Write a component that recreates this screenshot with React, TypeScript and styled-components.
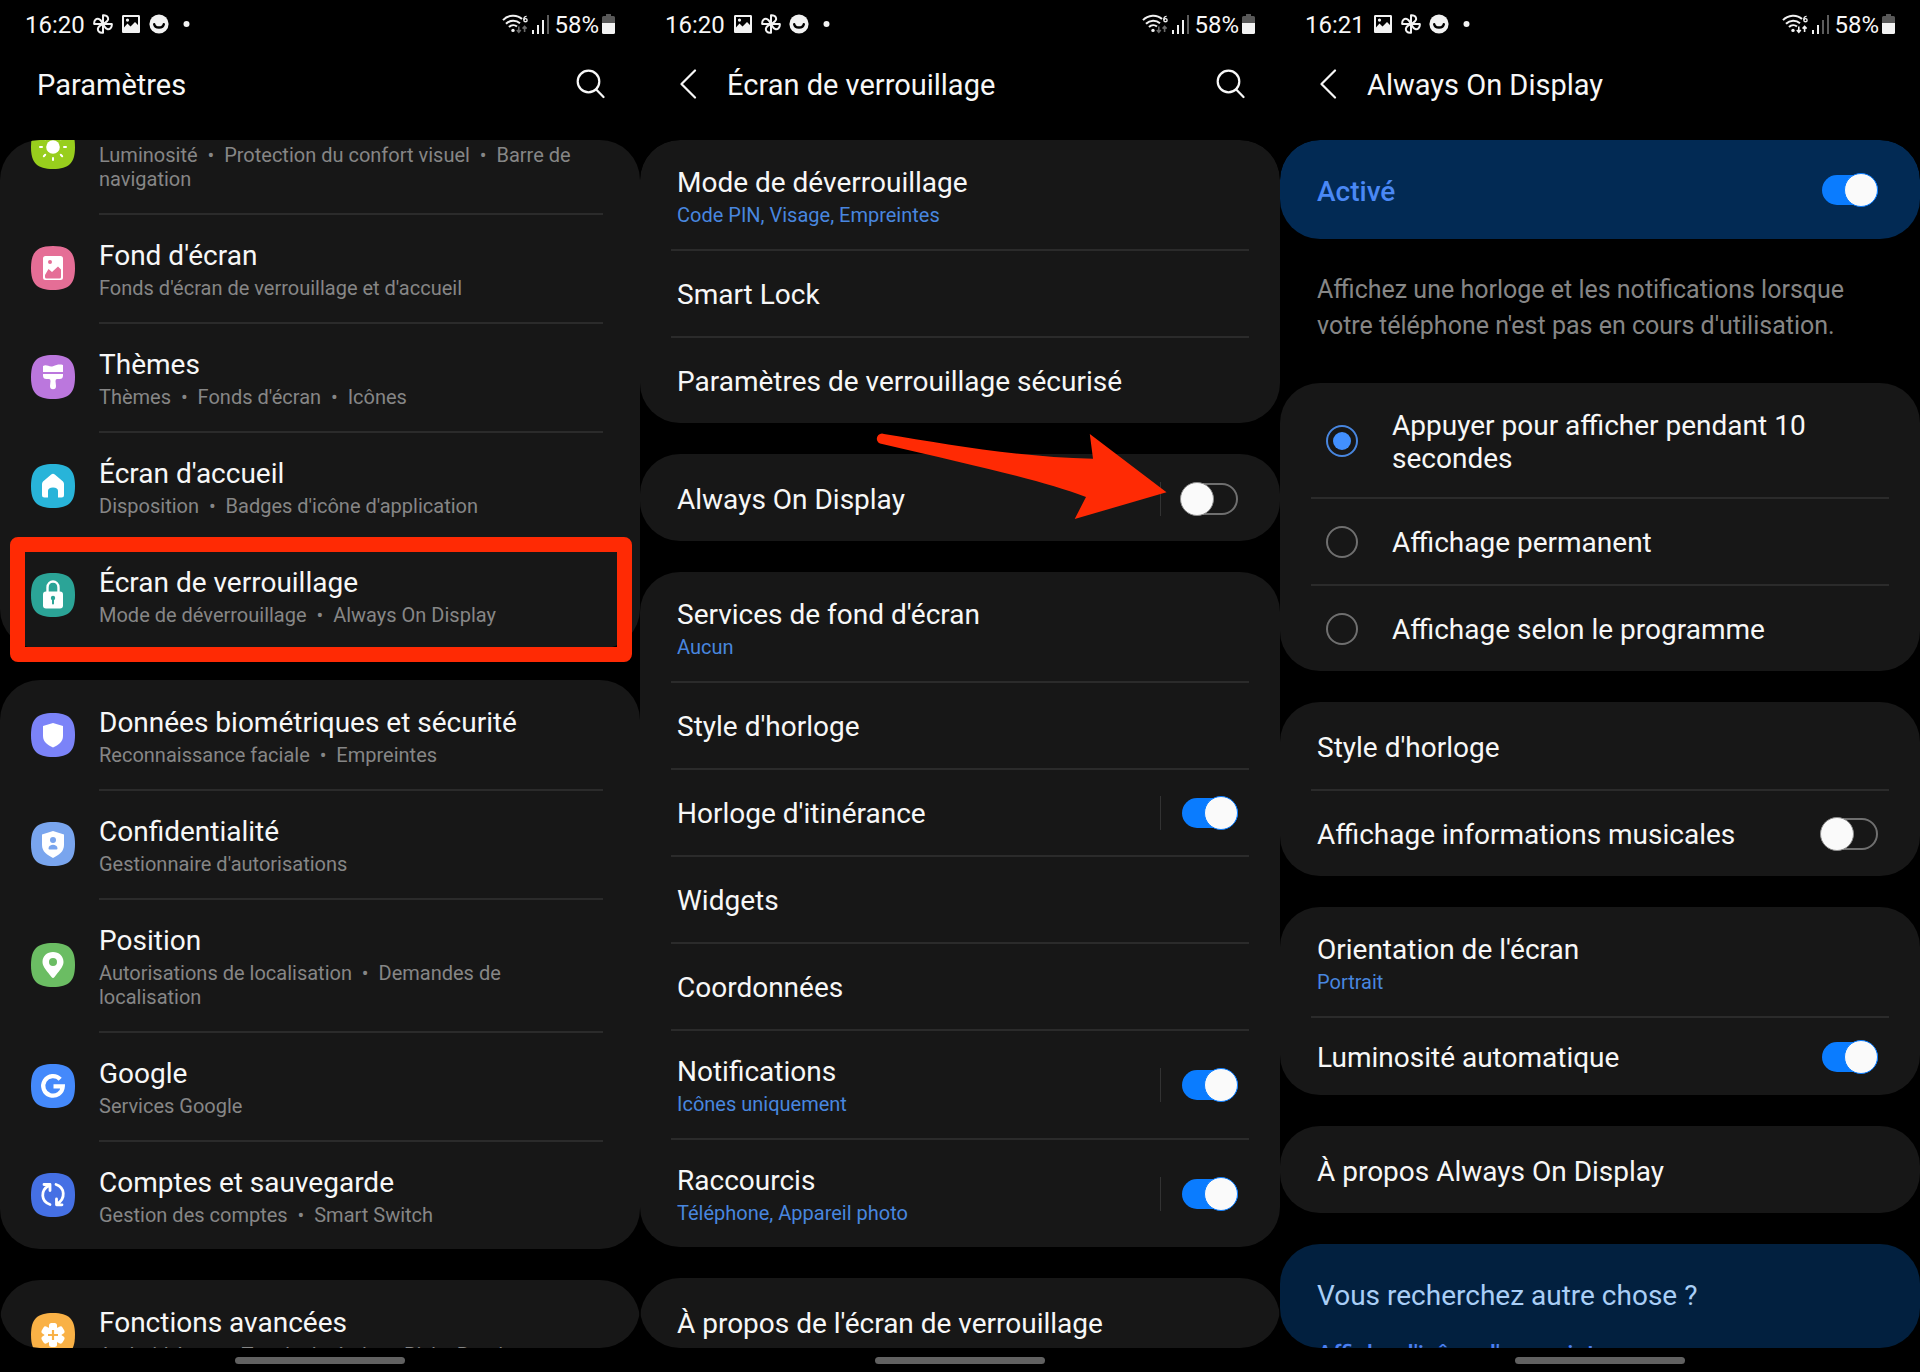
import React, { ReactNode, useId } from "react";
import styled, { createGlobalStyle, css } from "styled-components";

const color = {
  page: "#000000",
  card: "#171717",
  line: "#2b2b2b",
  text: "#f7f7f7",
  muted: "#868686",
  link: "#4886df",
  accent: "#4a88f5",
  switchOn: "#0a7cff",
  outline: "#6f6f6f",
  mark: "#ff2a04",
};

const GlobalStyle = createGlobalStyle`
  *, *::before, *::after { box-sizing: border-box; }
  body {
    margin: 0;
    background: ${color.page};
    color: ${color.text};
    font-family: Roboto, "Noto Sans", sans-serif;
  }
`;

/* ---------- Phone frame ---------- */

const Board = styled.main`
  display: grid;
  grid-template-columns: repeat(3, minmax(0, 1fr));
  height: 100vh;
`;

const Phone = styled.section`
  display: flex;
  flex-direction: column;
  min-height: 0;
  overflow: hidden;
`;

const StatusBar = styled.div`
  display: flex;
  align-items: center;
  justify-content: space-between;
  height: 48px;
  flex: none;
  padding: 0 25px;
  font-size: 24px;
  line-height: 28px;
`;

const StatusText = styled.span`
  padding-top: 2px;
`;

const StatusGroup = styled.div<{ $gap: number }>`
  display: flex;
  align-items: center;
  gap: ${(p) => p.$gap}px;
`;

const StatusGlyph = styled.svg`
  display: block;
  flex: none;
`;

const TopBar = styled.header`
  display: flex;
  align-items: center;
  height: 72px;
  flex: none;
  margin-bottom: 20px;
  padding: 0 30px 0 37px;
`;

const ScreenTitle = styled.h1`
  flex: 1;
  margin: 0;
  padding-top: 2px;
  font-size: 29px;
  font-weight: 400;
  line-height: 34px;
`;

const IconButton = styled.button<{ $width: number }>`
  display: flex;
  align-items: center;
  justify-content: flex-start;
  width: ${(p) => p.$width}px;
  height: 40px;
  padding: 0;
  border: 0;
  background: none;
  color: ${color.text};
  cursor: pointer;
`;

const ScrollArea = styled.div`
  flex: 1;
  min-height: 0;
  overflow: hidden;
  border-radius: 40px;
`;

const Stack = styled.div<{ $scrolled?: number }>`
  display: flex;
  flex-direction: column;
  gap: 31px;
  margin-top: -${(p) => p.$scrolled ?? 0}px;
`;

const NavBar = styled.div`
  display: flex;
  justify-content: center;
  flex: none;
  height: 24px;
  padding-top: 9px;
`;

const NavPill = styled.div`
  width: 170px;
  height: 7px;
  border-radius: 4px;
  background: #616161;
`;

/* ---------- Cards and rows ---------- */

const Card = styled.div<{ $tone?: string }>`
  position: relative;
  flex: none;
  border-radius: 40px;
  background: ${(p) => p.$tone ?? color.card};
`;

const Row = styled.div<{ $wide?: boolean }>`
  position: relative;
  display: flex;
  align-items: center;
  gap: 24px;
  padding: ${(p) => (p.$wide ? "0 31px" : "0 37px 0 31px")};
`;

const RowBody = styled.div<{ $wide?: boolean }>`
  display: flex;
  align-items: center;
  flex: 1;
  min-width: 0;
  padding: ${(p) => (p.$wide ? "0 11px 0 6px" : "0")};
  border-top: 2px solid ${color.line};

  ${Row}:first-child > & {
    border-top-color: transparent;
  }
`;

type Space = "single" | "double" | "wrapped" | "short";

const spacing = {
  single: css`padding: 27px 0 25px;`,
  double: css`padding: 24px 0 22px;`,
  wrapped: css`padding: 24px 0 22px;`,
  short: css`padding: 23px 0 21px;`,
};

const RowLink = styled.a<{ $space: Space }>`
  display: flex;
  flex-direction: column;
  flex: 1;
  gap: 4px;
  min-width: 0;
  color: inherit;
  text-decoration: none;
  ${(p) => spacing[p.$space]}
`;

const RowLabel = styled.label<{ $space: Space }>`
  flex: 1;
  min-width: 0;
  font-size: 28px;
  line-height: 33px;
  cursor: pointer;
  ${(p) => spacing[p.$space]}
`;

const RowTitle = styled.span`
  font-size: 28px;
  line-height: 33px;
`;

const RowNote = styled.span<{ $blue?: boolean }>`
  font-size: 20px;
  line-height: 24px;
  color: ${(p) => (p.$blue ? color.link : color.muted)};
`;

const ActiveRow = styled.div`
  display: flex;
  align-items: center;
  padding: 0 42px 0 37px;
`;

const ActiveLabel = styled.label`
  flex: 1;
  padding: 35px 0 31px;
  color: ${color.accent};
  font-size: 28px;
  font-weight: 500;
  line-height: 33px;
`;

const Description = styled.p`
  margin: 2px 0 8px;
  padding: 0 37px;
  color: ${color.muted};
  font-size: 25px;
  line-height: 36px;
`;

const HelpCard = styled(Card)`
  display: flex;
  flex-direction: column;
  align-items: flex-start;
  gap: 26px;
  padding: 35px 37px;
`;

const HelpTitle = styled.h2`
  margin: 0;
  color: #a9cef6;
  font-size: 28px;
  font-weight: 400;
  line-height: 33px;
`;

const HelpLink = styled.a`
  color: #4a7ff0;
  font-size: 24px;
  font-weight: 500;
  line-height: 32px;
  text-decoration: none;
`;

const SwitchDivider = styled.div`
  width: 1px;
  height: 34px;
  margin-right: 19px;
  background: #333333;
`;

const SwitchInput = styled.input`
  appearance: none;
  position: relative;
  flex: none;
  width: 58px;
  height: 34px;
  margin: 0;
  cursor: pointer;

  &::before {
    content: "";
    position: absolute;
    inset: 1px 0 1px 1px;
    border: 2px solid ${color.outline};
    border-radius: 16px;
  }

  &::after {
    content: "";
    position: absolute;
    inset: 0 24px 0 0;
    border: 1px solid #8c8c8c;
    border-radius: 50%;
    background: #fafafa;
  }

  &:checked::before {
    inset: 2px 0 2px 2px;
    border: 0;
    background: ${color.switchOn};
  }

  &:checked::after {
    inset: 0 0 0 24px;
    border: 1px solid ${color.switchOn};
  }
`;

const RadioInput = styled.input`
  appearance: none;
  display: grid;
  place-items: center;
  flex: none;
  width: 32px;
  height: 32px;
  margin: 0 34px 0 9px;
  border: 2px solid ${color.outline};
  border-radius: 50%;
  cursor: pointer;

  &:checked {
    border-color: ${color.link};
  }

  &:checked::before {
    content: "";
    width: 18px;
    height: 18px;
    border-radius: 50%;
    background: #4290ff;
  }
`;

/* ---------- Annotations lying over the screens ---------- */

const HighlightFrame = styled.div`
  position: absolute;
  inset: -3px 8px -13px 10px;
  border: 15px solid ${color.mark};
  border-radius: 8px;
  pointer-events: none;
`;

const ArrowMark = styled.svg`
  position: absolute;
  top: -22px;
  right: 112px;
  pointer-events: none;
`;

/* ---------- Glyphs ---------- */

const Pinwheel = () => (
  <StatusGlyph width="20" height="20" viewBox="0 0 20 20" fill="none" stroke="#f2f2f2" strokeWidth="2" strokeLinejoin="round">
    <path d="M10 10V1.200C14 .8 15.600 3.400 15 5.800C14.400 8 12 8.800 10 10Z" />
    <path d="M10 10H18.800C19.200 14 16.600 15.600 14.200 15C12 14.400 11.200 12 10 10Z" />
    <path d="M10 10V18.800C6 19.200 4.400 16.600 5 14.200C5.600 12 8 11.200 10 10Z" />
    <path d="M10 10H1.200C.8 6 3.400 4.400 5.800 5C8 5.600 8.800 8 10 10Z" />
  </StatusGlyph>
);

const Picture = () => (
  <StatusGlyph width="20" height="20" viewBox="0 0 20 20">
    <path
      fill="#f2f2f2"
      fillRule="evenodd"
      d="M2.500 1H17.500C18.600 1 19 1.600 19 2.500V17.500C19 18.500 18.500 19 17.500 19H2.500C1.500 19 1 18.500 1 17.500V2.500C1 1.500 1.500 1 2.500 1ZM3 3V13.500L6.500 9.500L9.500 12.500L14 8L17 11V3ZM6.500 4.500A1.600 1.600 0 1 1 6.500 7.700A1.600 1.600 0 0 1 6.500 4.500Z"
    />
  </StatusGlyph>
);

const Smile = () => (
  <StatusGlyph width="20" height="20" viewBox="0 0 20 20">
    <circle cx="10" cy="10" r="9.600" fill="#f2f2f2" />
    <path d="M5.200 10.200C6 14.600 14 14.600 14.800 10.200" fill="none" stroke="#000" strokeWidth="2.400" strokeLinecap="round" />
  </StatusGlyph>
);

const MoreDot = () => (
  <StatusGlyph width="20" height="20" viewBox="0 0 20 20">
    <circle cx="9.500" cy="10" r="3" fill="#f2f2f2" />
  </StatusGlyph>
);

const Wifi = ({ busy }: { busy?: boolean }) => (
  <StatusGlyph width="26" height="20" viewBox="0 0 26 20" fill="none" stroke="#f2f2f2" strokeWidth="2">
    <path d="M1 6.200C6 .6 15 .2 20 5" />
    <path d="M4 9.800C8 5.800 14 5.800 18 9.200" />
    <path d="M7 13C9.400 10.600 12.800 10.600 15 12.600" />
    <circle cx="11" cy="16.400" r="1.700" fill="#f2f2f2" stroke="none" />
    <path d="M24.600 2.400C22.200 2.200 21.600 4.400 22 6" strokeWidth="1.400" />
    <circle cx="23.500" cy="6.200" r="1.600" strokeWidth="1.400" />
    <g stroke={busy ? "#f2f2f2" : "#6a6a6a"} strokeWidth="1.600">
      <path d="M16.800 12.600V18M14.800 16L16.800 18.200L18.800 16" />
      <path d="M22.600 18V12.600M20.600 14.600L22.600 12.400L24.600 14.600" />
    </g>
  </StatusGlyph>
);

const Signal = ({ bars }: { bars: number }) => (
  <StatusGlyph width="18" height="20" viewBox="0 0 18 20">
    {[4, 9, 14, 19].map((h, i) => (
      <rect key={h} x={i * 5} y={20 - h} width="2" height={h} fill={i < bars ? "#f2f2f2" : "#5c5c5c"} />
    ))}
  </StatusGlyph>
);

const Battery = () => (
  <StatusGlyph width="13" height="20" viewBox="0 0 13 20">
    <path d="M4 0H9V2H11.500Q13 2 13 3.500V9H0V3.500Q0 2 1.500 2H4Z" fill="#585858" />
    <path d="M0 9H13V18.500Q13 20 11.500 20H1.500Q0 20 0 18.500Z" fill="#f2f2f2" />
  </StatusGlyph>
);

const SearchGlyph = () => (
  <svg width="29" height="30" viewBox="0 0 29 30" fill="none" stroke="currentColor" strokeWidth="2.200" strokeLinecap="round">
    <circle cx="12.500" cy="12.500" r="10.800" />
    <path d="M20.200 20.400L27.500 28" />
  </svg>
);

const BackGlyph = () => (
  <svg width="20" height="30" viewBox="0 0 20 30" fill="none" stroke="currentColor" strokeWidth="2.200" strokeLinecap="round" strokeLinejoin="round">
    <path d="M18 1.500L4.500 15L18 28.500" />
  </svg>
);

const AppIcon = ({ tint, children }: { tint: string; children: ReactNode }) => (
  <StatusGlyph width="44" height="44" viewBox="0 0 44 44" aria-hidden="true">
    <path d="M22 0C38 0 44 6 44 22S38 44 22 44 0 38 0 22 6 0 22 0Z" fill={tint} />
    {children}
  </StatusGlyph>
);

const sunRays = [0, 45, 90, 135, 180, 225, 270, 315];

const glyphs = {
  sun: (
    <g fill="#fff">
      <circle cx="22" cy="22" r="6.800" />
      {sunRays.map((a) => (
        <rect key={a} x="21" y="8" width="2" height="4" rx="1" transform={`rotate(${a} 22 22)`} />
      ))}
    </g>
  ),
  wallpaper: (
    <path
      fill="#fff"
      fillRule="evenodd"
      d="M14.500 10H29.500Q32 10 32 12.500V31.500Q32 34 29.500 34H14.500Q12 34 12 31.500V12.500Q12 10 14.500 10ZM14 29V31Q14 32.500 15.500 32.500H28.500Q30 32.500 30 31V23.500L27 20.500L21 26L17.500 23ZM19 14A2 2 0 1 0 19 18A2 2 0 0 0 19 14Z"
    />
  ),
  brush: (
    <path
      fill="#fff"
      d="M12 11C16 9 18 12.500 22 11.200C26 9.800 28 9 32 10V17H12ZM12 19H32V20.500Q32 24 28.500 24H26Q24.500 24 24.500 26L25 31A3 3.200 0 0 1 19 31L19.500 26Q19.500 24 18 24H15.500Q12 24 12 20.500Z"
    />
  ),
  home: <path fill="#fff" d="M20.200 10.600Q22 9 23.800 10.600L32 17.500Q33 18.500 33 20V31Q33 33.500 30.500 33.500H27V27Q27 23.500 22 23.500Q17 23.500 17 27V33.500H13.500Q11 33.500 11 31V20Q11 18.500 12 17.500Z" />,
  lock: (
    <g>
      <path d="M16.500 20V14.500C16.500 6.500 27.500 6.500 27.500 14.500V20" fill="none" stroke="#fff" strokeWidth="2.400" />
      <rect x="12" y="18.500" width="20" height="17" rx="3" fill="#fff" />
      <circle cx="22" cy="25" r="2.200" fill="#2ba497" />
      <path d="M22 25V30.500" stroke="#2ba497" strokeWidth="2" strokeLinecap="round" />
    </g>
  ),
  shield: <path fill="#fff" d="M22 10L32 13V23C32 29 27.500 32 22 34.500C16.500 32 12 29 12 23V13Z" />,
  privacy: (
    <g>
      <path fill="#fff" d="M22 9L33 12.500V23C33 29.500 28 33 22 36C16 33 11 29.500 11 23V12.500Z" />
      <circle cx="22" cy="18" r="3" fill="#79a5ee" />
      <path d="M17.500 26.500C17.500 21.500 26.500 21.500 26.500 26.500Q26.500 27.500 25.500 27.500H18.500Q17.500 27.500 17.500 26.500Z" fill="#79a5ee" />
    </g>
  ),
  pin: (
    <path
      fill="#fff"
      fillRule="evenodd"
      d="M22 9C28 9 32.500 13 32.500 19C32.500 24 27 29 23.500 34Q22 36 20.500 34C17 29 11.500 24 11.500 19C11.500 13 16 9 22 9ZM22 15A4 4 0 1 0 22 23A4 4 0 0 0 22 15Z"
    />
  ),
  google: (
    <path d="M29.200 15.200A9.800 9.800 0 1 0 31.800 22.400H22.500" fill="none" stroke="#fff" strokeWidth="4.200" />
  ),
  sync: (
    <g fill="none" stroke="#fff" strokeWidth="2.800" strokeLinecap="round" strokeLinejoin="round">
      <path d="M19 31.500C10 28.500 9 17.500 18 12.500M13 11.500H19V17.500" />
      <path d="M25 11.500C34 14.500 35 25.500 26 31M31 31.800H25.500V26" />
    </g>
  ),
  gear: (
    <g>
      <circle cx="22" cy="22" r="8.500" fill="#fff" />
      {[0, 60, 120, 180, 240, 300].map((a) => (
        <rect key={a} x="18" y="10" width="8" height="8" rx="2.500" fill="#fff" transform={`rotate(${a} 22 22)`} />
      ))}
      <path d="M22 17V27M17 22H27" stroke="#f9b146" strokeWidth="2.200" />
    </g>
  ),
};

/* ---------- Composite parts ---------- */

type StatusKind = "pinwheel" | "picture";

const Screen = (props: {
  time: string;
  order: StatusKind[];
  title: string;
  back?: boolean;
  search?: boolean;
  busy?: boolean;
  bars: number;
  scrolled?: number;
  children: ReactNode;
}) => (
  <Phone>
    <StatusBar>
      <StatusGroup $gap={8}>
        <StatusText>{props.time}</StatusText>
        {props.order.map((k) => (k === "pinwheel" ? <Pinwheel key={k} /> : <Picture key={k} />))}
        <Smile />
        <MoreDot />
      </StatusGroup>
      <StatusGroup $gap={4}>
        <Wifi busy={props.busy} />
        <Signal bars={props.bars} />
        <StatusGroup $gap={3}>
          <StatusText>58%</StatusText>
          <Battery />
        </StatusGroup>
      </StatusGroup>
    </StatusBar>
    <TopBar>
      {props.back && (
        <IconButton type="button" aria-label="Retour" $width={50}>
          <BackGlyph />
        </IconButton>
      )}
      <ScreenTitle>{props.title}</ScreenTitle>
      {props.search && (
        <IconButton type="button" aria-label="Rechercher" $width={34}>
          <SearchGlyph />
        </IconButton>
      )}
    </TopBar>
    <ScrollArea>
      <Stack $scrolled={props.scrolled}>{props.children}</Stack>
    </ScrollArea>
    <NavBar>
      <NavPill />
    </NavBar>
  </Phone>
);

const AppRow = (props: {
  glyph: keyof typeof glyphs;
  tint: string;
  title: string;
  notes: string[];
  highlighted?: boolean;
}) => (
  <Row>
    <AppIcon tint={props.tint}>{glyphs[props.glyph]}</AppIcon>
    <RowBody>
      <RowLink href={`#${props.glyph}`} $space="double">
        <RowTitle>{props.title}</RowTitle>
        <RowNote>{props.notes.join("\u00a0\u00a0•\u00a0 ")}</RowNote>
      </RowLink>
    </RowBody>
    {props.highlighted && <HighlightFrame />}
  </Row>
);

const OptionRow = (props: { title: string; note?: string; toggle?: boolean }) => (
  <Row $wide>
    <RowBody $wide>
      <RowLink href="#option" $space={props.note ? "double" : "single"}>
        <RowTitle>{props.title}</RowTitle>
        {props.note && <RowNote $blue>{props.note}</RowNote>}
      </RowLink>
      {props.toggle !== undefined && (
        <>
          <SwitchDivider />
          <SwitchInput type="checkbox" role="switch" aria-label={props.title} defaultChecked={props.toggle} />
        </>
      )}
    </RowBody>
  </Row>
);

const ToggleRow = (props: { title: string; on: boolean; space: Space }) => {
  const id = useId();
  return (
    <Row $wide>
      <RowBody $wide>
        <RowLabel htmlFor={id} $space={props.space}>
          {props.title}
        </RowLabel>
        <SwitchInput id={id} type="checkbox" role="switch" defaultChecked={props.on} />
      </RowBody>
    </Row>
  );
};

const RadioRow = (props: { title: string; checked?: boolean; space: Space }) => {
  const id = useId();
  return (
    <Row $wide>
      <RowBody $wide>
        <RadioInput id={id} type="radio" name="affichage" defaultChecked={props.checked} />
        <RowLabel htmlFor={id} $space={props.space}>
          {props.title}
        </RowLabel>
      </RowBody>
    </Row>
  );
};

/* ---------- Screens ---------- */

const SettingsScreen = () => (
  <Screen time="16:20" order={["pinwheel", "picture"]} title="Paramètres" search bars={3} scrolled={60}>
    <Card>
      <AppRow glyph="sun" tint="#98ce1d" title="Affichage" notes={["Luminosité", "Protection du confort visuel", "Barre de navigation"]} />
      <AppRow glyph="wallpaper" tint="#e56e96" title="Fond d'écran" notes={["Fonds d'écran de verrouillage et d'accueil"]} />
      <AppRow glyph="brush" tint="#bb77dd" title="Thèmes" notes={["Thèmes", "Fonds d'écran", "Icônes"]} />
      <AppRow glyph="home" tint="#28b4d9" title="Écran d'accueil" notes={["Disposition", "Badges d'icône d'application"]} />
      <AppRow glyph="lock" tint="#2ba497" title="Écran de verrouillage" notes={["Mode de déverrouillage", "Always On Display"]} highlighted />
    </Card>
    <Card>
      <AppRow glyph="shield" tint="#7b83f8" title="Données biométriques et sécurité" notes={["Reconnaissance faciale", "Empreintes"]} />
      <AppRow glyph="privacy" tint="#79a5ee" title="Confidentialité" notes={["Gestionnaire d'autorisations"]} />
      <AppRow glyph="pin" tint="#6bbd63" title="Position" notes={["Autorisations de localisation", "Demandes de localisation"]} />
      <AppRow glyph="google" tint="#4489fb" title="Google" notes={["Services Google"]} />
      <AppRow glyph="sync" tint="#4570e4" title="Comptes et sauvegarde" notes={["Gestion des comptes", "Smart Switch"]} />
    </Card>
    <Card>
      <AppRow glyph="gear" tint="#f9b146" title="Fonctions avancées" notes={["Android Auto", "Touche latérale", "Bixby Routines"]} />
    </Card>
  </Screen>
);

const LockScreen = () => (
  <Screen time="16:20" order={["picture", "pinwheel"]} title="Écran de verrouillage" back search bars={3}>
    <Card>
      <OptionRow title="Mode de déverrouillage" note="Code PIN, Visage, Empreintes" />
      <OptionRow title="Smart Lock" />
      <OptionRow title="Paramètres de verrouillage sécurisé" />
    </Card>
    <Card>
      <OptionRow title="Always On Display" toggle={false} />
      <ArrowMark width="292" height="88" viewBox="0 0 292 88" aria-hidden="true">
        <path d="M8 2C70 12 140 25 217 26.700L213.800 2L290.500 60.300L198.700 87L210 65C165 48 100 34 4 11.500A5 5 0 0 1 8 2Z" fill={color.mark} />
      </ArrowMark>
    </Card>
    <Card>
      <OptionRow title="Services de fond d'écran" note="Aucun" />
      <OptionRow title="Style d'horloge" />
      <OptionRow title="Horloge d'itinérance" toggle />
      <OptionRow title="Widgets" />
      <OptionRow title="Coordonnées" />
      <OptionRow title="Notifications" note="Icônes uniquement" toggle />
      <OptionRow title="Raccourcis" note="Téléphone, Appareil photo" toggle />
    </Card>
    <Card>
      <OptionRow title="À propos de l'écran de verrouillage" />
    </Card>
  </Screen>
);

const AlwaysOnScreen = () => (
  <Screen time="16:21" order={["picture", "pinwheel"]} title="Always On Display" back busy bars={2}>
    <Card $tone="#022a54">
      <ActiveRow>
        <ActiveLabel htmlFor="aod-active">Activé</ActiveLabel>
        <SwitchInput id="aod-active" type="checkbox" role="switch" defaultChecked />
      </ActiveRow>
    </Card>
    <Description>Affichez une horloge et les notifications lorsque votre téléphone n'est pas en cours d'utilisation.</Description>
    <Card>
      <RadioRow title="Appuyer pour afficher pendant 10 secondes" space="wrapped" checked />
      <RadioRow title="Affichage permanent" space="single" />
      <RadioRow title="Affichage selon le programme" space="single" />
    </Card>
    <Card>
      <OptionRow title="Style d'horloge" />
      <ToggleRow title="Affichage informations musicales" on={false} space="single" />
    </Card>
    <Card>
      <OptionRow title="Orientation de l'écran" note="Portrait" />
      <ToggleRow title="Luminosité automatique" on space="short" />
    </Card>
    <Card>
      <OptionRow title="À propos Always On Display" />
    </Card>
    <HelpCard $tone="#02203f">
      <HelpTitle>Vous recherchez autre chose ?</HelpTitle>
      <HelpLink href="#empreinte">Afficher l'icône d'empreinte</HelpLink>
    </HelpCard>
  </Screen>
);

export default function App() {
  return (
    <>
      <GlobalStyle />
      <Board>
        <SettingsScreen />
        <LockScreen />
        <AlwaysOnScreen />
      </Board>
    </>
  );
}
